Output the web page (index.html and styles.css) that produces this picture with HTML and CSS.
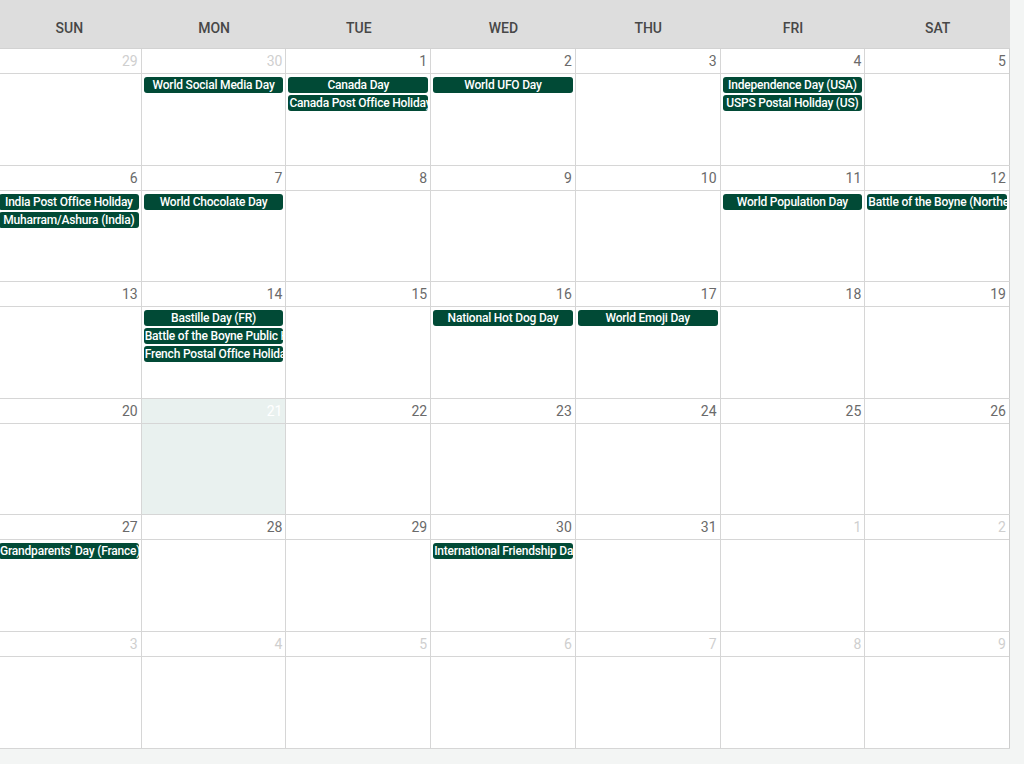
FILE: index.html
```html
<!DOCTYPE html>
<html>
<head>
<meta charset="utf-8">
<link rel="stylesheet" href="styles.css">
</head>
<body>
<div class="cal">
  <div class="head">
    <div>SUN</div><div>MON</div><div>TUE</div><div>WED</div><div>THU</div><div>FRI</div><div>SAT</div>
  </div>
  <div class="weeks">
    <div class="week">
      <div class="day other"><div class="num">29</div><div class="events"></div></div>
      <div class="day other"><div class="num">30</div><div class="events"><div class="ev">World Social Media Day</div></div></div>
      <div class="day"><div class="num">1</div><div class="events"><div class="ev">Canada Day</div><div class="ev">Canada Post Office Holiday</div></div></div>
      <div class="day"><div class="num">2</div><div class="events"><div class="ev">World UFO Day</div></div></div>
      <div class="day"><div class="num">3</div><div class="events"></div></div>
      <div class="day"><div class="num">4</div><div class="events"><div class="ev">Independence Day (USA)</div><div class="ev">USPS Postal Holiday (US)</div></div></div>
      <div class="day"><div class="num">5</div><div class="events"></div></div>
    </div>
    <div class="week">
      <div class="day"><div class="num">6</div><div class="events"><div class="ev">India Post Office Holiday</div><div class="ev">Muharram/Ashura (India)</div></div></div>
      <div class="day"><div class="num">7</div><div class="events"><div class="ev">World Chocolate Day</div></div></div>
      <div class="day"><div class="num">8</div><div class="events"></div></div>
      <div class="day"><div class="num">9</div><div class="events"></div></div>
      <div class="day"><div class="num">10</div><div class="events"></div></div>
      <div class="day"><div class="num">11</div><div class="events"><div class="ev">World Population Day</div></div></div>
      <div class="day"><div class="num">12</div><div class="events"><div class="ev">Battle of the Boyne (Northern Ireland)</div></div></div>
    </div>
    <div class="week">
      <div class="day"><div class="num">13</div><div class="events"></div></div>
      <div class="day"><div class="num">14</div><div class="events"><div class="ev">Bastille Day (FR)</div><div class="ev">Battle of the Boyne Public Holiday</div><div class="ev">French Postal Office Holiday</div></div></div>
      <div class="day"><div class="num">15</div><div class="events"></div></div>
      <div class="day"><div class="num">16</div><div class="events"><div class="ev">National Hot Dog Day</div></div></div>
      <div class="day"><div class="num">17</div><div class="events"><div class="ev">World Emoji Day</div></div></div>
      <div class="day"><div class="num">18</div><div class="events"></div></div>
      <div class="day"><div class="num">19</div><div class="events"></div></div>
    </div>
    <div class="week">
      <div class="day"><div class="num">20</div><div class="events"></div></div>
      <div class="day today"><div class="num">21</div><div class="events"></div></div>
      <div class="day"><div class="num">22</div><div class="events"></div></div>
      <div class="day"><div class="num">23</div><div class="events"></div></div>
      <div class="day"><div class="num">24</div><div class="events"></div></div>
      <div class="day"><div class="num">25</div><div class="events"></div></div>
      <div class="day"><div class="num">26</div><div class="events"></div></div>
    </div>
    <div class="week">
      <div class="day"><div class="num">27</div><div class="events"><div class="ev">Grandparents' Day (France)</div></div></div>
      <div class="day"><div class="num">28</div><div class="events"></div></div>
      <div class="day"><div class="num">29</div><div class="events"></div></div>
      <div class="day"><div class="num">30</div><div class="events"><div class="ev">International Friendship Day</div></div></div>
      <div class="day"><div class="num">31</div><div class="events"></div></div>
      <div class="day other"><div class="num">1</div><div class="events"></div></div>
      <div class="day other"><div class="num">2</div><div class="events"></div></div>
    </div>
    <div class="week">
      <div class="day other"><div class="num">3</div><div class="events"></div></div>
      <div class="day other"><div class="num">4</div><div class="events"></div></div>
      <div class="day other"><div class="num">5</div><div class="events"></div></div>
      <div class="day other"><div class="num">6</div><div class="events"></div></div>
      <div class="day other"><div class="num">7</div><div class="events"></div></div>
      <div class="day other"><div class="num">8</div><div class="events"></div></div>
      <div class="day other"><div class="num">9</div><div class="events"></div></div>
    </div>
  </div>
</div>
</body>
</html>
```

FILE: styles.css
```css
html, body {
  margin: 0;
  padding: 0;
  background: #f3f5f4;
  font-family: Roboto, "Liberation Sans", sans-serif;
  overflow: hidden;
}
.cal {
  margin-left: -3px;
  width: 1013px;
  background: #fff;
}
.head {
  display: grid;
  grid-template-columns: repeat(7, 1fr);
  height: 49px;
  background: #dddddd;
  border-bottom: 1px solid #d2d2d2;
  box-sizing: border-box;
}
.head div {
  display: flex;
  align-items: center;
  justify-content: center;
  padding-top: 7px;
  font-size: 14px;
  font-weight: 500;
  color: #474747;
}
.weeks {
  display: grid;
  grid-template-rows: repeat(6, 1fr);
  height: 700px;
  border-bottom: 1px solid #d6d6d6;
  box-sizing: border-box;
}
.week {
  display: grid;
  grid-template-columns: repeat(7, 1fr);
  border-bottom: 1px solid #d6d6d6;
}
.week:last-child { border-bottom: none; }
.day {
  border-right: 1px solid #d6d6d6;
  display: flex;
  flex-direction: column;
  min-width: 0;
}
.day:last-child { border-right-color: #cdcdcd; }
.num {
  height: 24px;
  line-height: 24px;
  border-bottom: 1px solid #d6d6d6;
  text-align: right;
  padding-right: 3px;
  font-size: 14px;
  color: #6a6a6a;
}
.other .num { color: #cfcfcf; }
.today { background: #e9f1ef; }
.today .num { color: #fff; }
.events {
  display: flex;
  flex-direction: column;
  gap: 2px;
  padding: 3px 2px 0 2px;
}
.ev {
  height: 16px;
  line-height: 16px;
  background: #014a36;
  border-radius: 3px;
  color: #fff;
  font-size: 12px;
  font-weight: 500;
  letter-spacing: -0.2px;
  text-align: center;
  white-space: nowrap;
  overflow: hidden;
  padding: 0 1px;
}
```
